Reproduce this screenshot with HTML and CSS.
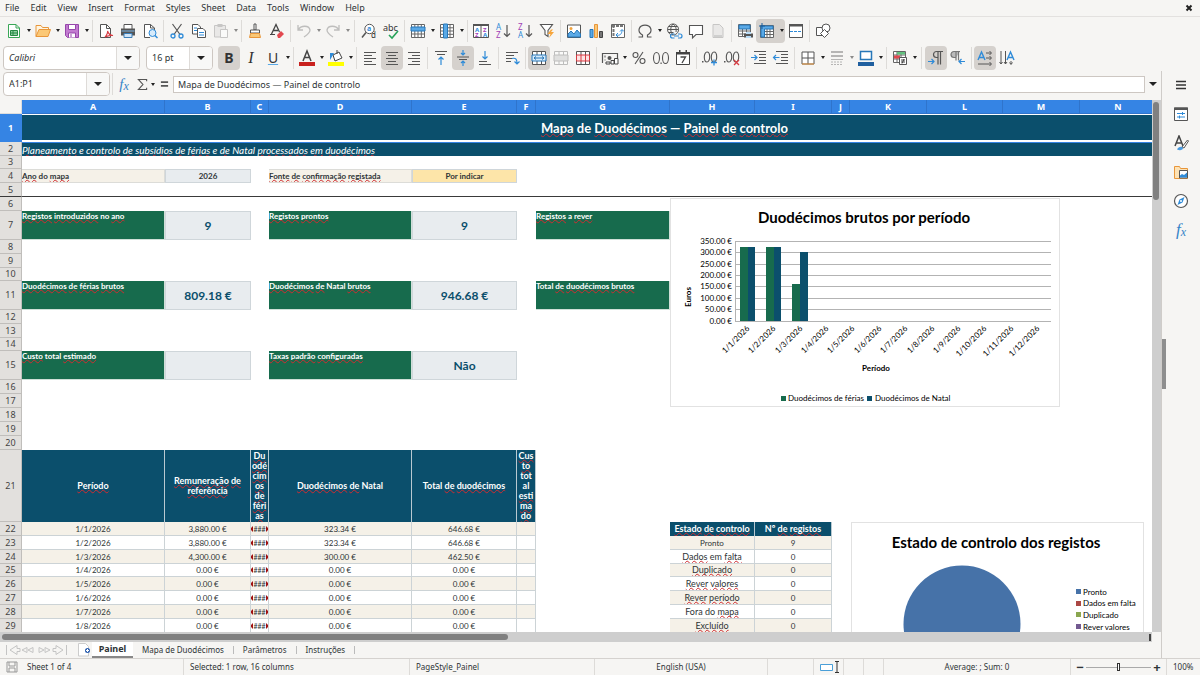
FILE: index.html
```html
<!DOCTYPE html>
<html lang="en">
<head>
<meta charset="utf-8">
<title>Mapa de Duodécimos</title>
<link rel="stylesheet" href="styles.css">
</head>
<body>
<nav class="menubar">
<button>File</button><button>Edit</button><button>View</button><button>Insert</button><button>Format</button><button>Styles</button><button>Sheet</button><button>Data</button><button>Tools</button><button>Window</button><button>Help</button>
<button class="close" aria-label="Close document"><svg width="8" height="8" viewBox="0 0 8 8"><path d="M1.500 1.500l5 5M6.500 1.500l-5 5" stroke="#222" stroke-width="2"/></svg></button>
</nav>

<div class="toolbar">
<button class="tb split" aria-label="New"><svg viewBox="0 0 16 16"><path d="M2.500 1.500h7.500l3.500 3.500v9.500h-11z" fill="#fff" stroke="#3aa757"/><path d="M10 1.500V5h3.500" fill="none" stroke="#3aa757"/><path d="M4.500 7.500h7v5h-7zM4.500 10h7M7 7.500v5" fill="#8fd3a2" stroke="#268844"/></svg><i class="arr"></i></button>
<button class="tb split" aria-label="Open"><svg viewBox="0 0 16 16"><path d="M1 13.500V2.500h5l1.500 2h6v3" fill="#fff4df" stroke="#e8963a"/><path d="M1 13.500l3-7h11.500l-2.500 7z" fill="#fbc876" stroke="#e8963a"/></svg><i class="arr"></i></button>
<button class="tb split" aria-label="Save"><svg viewBox="0 0 16 16"><path d="M1.500 1.500h13v13h-11l-2-2z" fill="#c27bd0" stroke="#9646ab"/><path d="M4.500 1.500h7v5h-7z" fill="#fff" stroke="#9646ab"/><path d="M4.500 14.500v-4.500h7v4.500" fill="#fff" stroke="#9646ab"/><path d="M7 11v3" stroke="#9646ab"/></svg><i class="arr"></i></button>
<span class="sep"></span>
<button class="tb" aria-label="Export as PDF"><svg viewBox="0 0 16 16"><path d="M2.500 1.500h6l4 4v9h-10z" fill="#fff" stroke="#555"/><path d="M8.500 1.500v4h4" fill="none" stroke="#555"/><path d="M7 14c2-2 3-5 2.500-6 1 3 3 4.500 5.500 4.500-3-.5-5 0-8 1.500" fill="none" stroke="#d63b42" stroke-width="1.200"/></svg></button>
<button class="tb" aria-label="Print"><svg viewBox="0 0 16 16"><path d="M4 6V1.500h8V6" fill="#fff" stroke="#555"/><path d="M1 5.500h14v7H1z" fill="#555"/><path d="M1.500 7.500h13v1h-13z" fill="#7db7e6"/><path d="M4 10.500h8v4H4z" fill="#cfe4f7" stroke="#3b7eb8"/></svg></button>
<button class="tb" aria-label="Print preview"><svg viewBox="0 0 16 16"><path d="M12.500 7V5l-4-3.500h-6v13H8M8.500 1.500V5h4" fill="#fff" stroke="#555"/><circle cx="10.500" cy="10" r="3.500" fill="#d7ebfb" stroke="#2f8bd8"/><path d="M13 12.500l2.500 2.500" stroke="#2f8bd8" stroke-width="1.500"/></svg></button>
<span class="sep"></span>
<button class="tb" aria-label="Cut"><svg viewBox="0 0 16 16"><path d="M3.500 1L11 11.500M12.500 1L5 11.500" stroke="#555" stroke-width="1.200"/><circle cx="4" cy="13" r="2" fill="none" stroke="#2f8bd8" stroke-width="1.300"/><circle cx="12" cy="13" r="2" fill="none" stroke="#2f8bd8" stroke-width="1.300"/></svg></button>
<button class="tb" aria-label="Copy"><svg viewBox="0 0 16 16"><path d="M1.500 1.500h5.500l2.500 2.500v7h-8z" fill="#fff" stroke="#555"/><path d="M6.500 5.500h5.500l2.500 2.500v6.500h-8z" fill="#fff" stroke="#555"/><path d="M3 5h3M3 7.500h3M8 9.500h5M8 12h5" stroke="#2f8bd8"/></svg></button>
<button class="tb split dim" aria-label="Paste"><svg viewBox="0 0 16 16"><path d="M1.500 2.500h11v11.500h-11z" fill="#ddd" stroke="#999"/><path d="M4.500 1h5v3h-5z" fill="#999"/><path d="M7.500 6.500h7v8h-7z" fill="#fff" stroke="#999"/></svg><i class="arr"></i></button>
<span class="sep"></span>
<button class="tb" aria-label="Clone formatting"><svg viewBox="0 0 16 16"><path d="M7 1h2v6H7z" fill="#fff" stroke="#555"/><path d="M3.500 7h9v3h-9z" fill="#fff" stroke="#555"/><path d="M3.500 10.500h9l1 4h-11z" fill="#fbc876" stroke="#e8963a"/></svg></button>
<button class="tb" aria-label="Clear formatting"><svg viewBox="0 0 16 16"><path d="M2.500 11L7 1.500 10.500 9M4 7.500h5" fill="none" stroke="#444" stroke-width="1.300"/><path d="M1 11.500h5" stroke="#444"/><path d="M8 12l4-4 3 3-4 4H9z" fill="#e2484f"/></svg></button>
<span class="sep"></span>
<button class="tb split dim" aria-label="Undo"><svg viewBox="0 0 16 16"><path d="M2 2v5h5M2 7c3-5 11-5 12 0 0 3-3 5-6 7" fill="none" stroke="#888" stroke-width="1.300"/></svg><i class="arr"></i></button>
<button class="tb split dim" aria-label="Redo"><svg viewBox="0 0 16 16"><path d="M14 2v5H9M14 7C11 2 3 2 2 7c0 3 3 5 6 7" fill="none" stroke="#888" stroke-width="1.300"/></svg><i class="arr"></i></button>
<span class="sep wide"></span>
<button class="tb" aria-label="Find and replace"><svg viewBox="0 0 16 16"><circle cx="8.500" cy="6" r="4.700" fill="#fff" stroke="#555"/><path d="M5 9.500L1 14.500" stroke="#555" stroke-width="1.500"/><text x="6" y="8" font-size="7" font-weight="700" fill="#2f8bd8">a</text><text x="10" y="15" font-size="8" fill="#333">d</text></svg></button>
<button class="tb" aria-label="Spelling"><svg viewBox="0 0 16 16"><text x="0" y="8" font-size="9" fill="#333">abc</text><path d="M6 12l3 3 6-7" fill="none" stroke="#27a35a" stroke-width="1.600"/></svg></button>
<span class="sep"></span>
<button class="tb split" aria-label="Row"><svg viewBox="0 0 16 16"><path d="M1.500 1.500h13v13h-13zM1.500 11h13M4.800 1.500v13M8 1.500v13M11.300 1.500v13" fill="#fff" stroke="#666"/><path d="M1 4h14v4H1z" fill="#5aa9e6" stroke="#2777b8"/></svg><i class="arr"></i></button>
<button class="tb split" aria-label="Column"><svg viewBox="0 0 16 16"><path d="M1.500 1.500h13v13h-13zM11 1.500v13M1.500 4.800h13M1.500 8h13M1.500 11.300h13" fill="#fff" stroke="#666"/><path d="M4.500 1h4v14h-4z" fill="#5aa9e6" stroke="#2777b8"/></svg><i class="arr"></i></button>
<span class="sep"></span>
<button class="tb" aria-label="Sort"><svg viewBox="0 0 16 16"><path d="M.5 1.500h15v13H.5zM8 2v12" fill="#fff" stroke="#555"/><path d="M0 1h16v2H0z" fill="#555"/><g font-size="6" font-weight="700"><text x="2" y="8.500" fill="#2f8bd8">A</text><text x="2" y="14" fill="#a13fb5">Z</text><text x="10" y="8.500" fill="#a13fb5">Z</text><text x="10" y="14" fill="#2f8bd8">A</text></g></svg></button>
<button class="tb" aria-label="Sort ascending"><svg viewBox="0 0 16 16"><text x="1" y="7" font-size="8" fill="#2f8bd8">A</text><text x="1" y="15" font-size="8" fill="#a13fb5">Z</text><path d="M12 2v11M9 10.500l3 3 3-3" fill="none" stroke="#555" stroke-width="1.200"/></svg></button>
<button class="tb" aria-label="Sort descending"><svg viewBox="0 0 16 16"><text x="1" y="7" font-size="8" fill="#a13fb5">Z</text><text x="1" y="15" font-size="8" fill="#2f8bd8">A</text><path d="M12 2v11M9 10.500l3 3 3-3" fill="none" stroke="#555" stroke-width="1.200"/></svg></button>
<button class="tb" aria-label="AutoFilter"><svg viewBox="0 0 16 16"><path d="M1.500 1.500h12L9 7.500v6L6 11.500v-4z" fill="#fff" stroke="#555" stroke-width="1.100"/><path d="M12 6.500L8.500 11h3l-1.500 4 5-6h-3l2-2.500z" fill="#f7a53b"/></svg></button>
<span class="sep"></span>
<button class="tb" aria-label="Insert image"><svg viewBox="0 0 16 16"><path d="M1.500 2h13v12.500h-13z" fill="#fff" stroke="#555"/><circle cx="5" cy="5.500" r="1.500" fill="#f2a33c"/><path d="M2 14v-3l3-3 3 3 3-4 3.500 4v3z" fill="#5aa9e6" stroke="#2777b8"/></svg></button>
<button class="tb" aria-label="Insert chart"><svg viewBox="0 0 16 16"><path d="M2 6.500h3v8H2z" fill="#5aa9e6" stroke="#2777b8"/><path d="M6.500 1.500h3v13h-3z" fill="#fbc876" stroke="#e8963a"/><path d="M11.500 8.500h3v6h-3z" fill="#777" stroke="#444"/></svg></button>
<button class="tb" aria-label="Pivot table"><svg viewBox="0 0 16 16"><path d="M1.500 1.500h13v13h-13z" fill="#fff" stroke="#666"/><path d="M2 3h12M3.500 2v12" stroke="#777" stroke-width="2" stroke-dasharray="3 1"/><path d="M6 12c4 1 6-1 6-5M10 8.500L12 6.500l2 2M8 10l-2 2 2 2" fill="none" stroke="#2f8bd8"/></svg></button>
<span class="sep"></span>
<button class="tb split" aria-label="Special character"><svg viewBox="0 0 16 16"><path d="M1.500 14h4v-2C2 10 1.500 7.500 2.300 5.500 4 1 12 1 13.700 5.500 14.500 7.500 14 10 10.500 12v2h4" fill="none" stroke="#555" stroke-width="1.200"/></svg><i class="arr"></i></button>
<button class="tb" aria-label="Hyperlink"><svg viewBox="0 0 16 16"><path d="M7 1a5.500 5.500 0 1 0 .1 0M1.500 6.500h11M2.500 3.500h9M2.500 9.500h5M7 1C4 4 4 9 7 12M7 1c3 2 3.500 5 3 8" fill="none" stroke="#555"/><path d="M8.500 11h-2a2 2 0 0 0 0 4h2M12 11h2a2 2 0 0 1 0 4h-2M8 13h5" fill="none" stroke="#2f8bd8" stroke-width="1.200"/></svg></button>
<button class="tb" aria-label="Comment"><svg viewBox="0 0 16 16"><path d="M1.500 2.500h13v9H8L4.500 15v-3.500h-3z" fill="#fff" stroke="#555" stroke-width="1.100"/></svg></button>
<button class="tb dim" aria-label="Headers and footers"><svg viewBox="0 0 16 16"><path d="M3 1.500h6.500l3.500 3.500v9.500H3z" fill="#ddd" stroke="#999"/><path d="M4 12h8v2H4z" fill="#aaa"/></svg></button>
<span class="sep"></span>
<button class="tb" aria-label="Print area"><svg viewBox="0 0 16 16"><path d="M1.500 1.500h12v12h-12zM5.500 1.500v12M9.500 1.500v12M1.500 8h12M1.500 11h12" fill="#fff" stroke="#666"/><path d="M2 2h11v4H2z" fill="#5aa9e6" stroke="#2777b8"/><path d="M7 10.500h9v4H7z" fill="#555"/><path d="M9 9h5v2H9zM9 13h5v2H9z" fill="#b9dcf7"/></svg></button>
<button class="tb split on" aria-label="Freeze rows and columns"><svg viewBox="0 0 16 16"><path d="M1.500 2.500h13v12h-13zM8 2v12M11 2v12M2 8.500h12M2 11.500h12" fill="#fff" stroke="#666"/><path d="M2 3h12v3H5.500v8H2z" fill="#5aa9e6" stroke="#2777b8"/><path d="M3 0v6M0 3h6" stroke="#185f9e"/></svg><i class="arr"></i></button>
<button class="tb" aria-label="Split window"><svg viewBox="0 0 16 16"><path d="M1.500 2h13v12.500h-13z" fill="#fff" stroke="#555"/><path d="M1 1h14v2.500H1z" fill="#555"/><path d="M2 8.500h12" stroke="#2f8bd8" stroke-dasharray="3 1"/></svg></button>
<span class="sep"></span>
<button class="tb" aria-label="Show draw functions"><svg viewBox="0 0 16 16"><path d="M1.500 4.500h8v8h-8z" fill="#fff" stroke="#555"/><circle cx="11" cy="5" r="4" fill="#fff" stroke="#555"/><path d="M9.500 6.500l4 4-4 4-4-4z" fill="#fff" stroke="#555"/></svg></button>
</div>

<div class="toolbar fmt">
<div class="combo font"><input value="Calibri" aria-label="Font name"><button aria-label="Font list"><i class="arr big"></i></button></div>
<div class="combo size"><input value="16 pt" aria-label="Font size"><button aria-label="Size list"><i class="arr big"></i></button></div>
<button class="tb on glyph"><b>B</b></button>
<button class="tb glyph serif"><em>I</em></button>
<button class="tb split glyph"><u>U</u><i class="arr"></i></button>
<span class="sep"></span>
<button class="tb split" aria-label="Font colour"><svg viewBox="0 0 16 16"><path d="M4 11L8 1l4 10M5.500 7.500h5" fill="none" stroke="#444" stroke-width="1.500"/><path d="M0 12h16v4H0z" fill="#c9211e"/></svg><i class="arr"></i></button>
<button class="tb split" aria-label="Background colour"><svg viewBox="0 0 16 16"><path d="M5 5l6-3 3 6-7 3z" fill="#fff" stroke="#444"/><path d="M5 5L2 10V3h4" fill="#2f8bd8"/><path d="M9 0v4" stroke="#444"/><path d="M0 12h16v4H0z" fill="#ff0"/></svg><i class="arr"></i></button>
<span class="sep"></span>
<button class="tb" aria-label="Align left"><svg viewBox="0 0 16 16"><path d="M2 2.500h12M2 5.500h8M2 8.500h12M2 11.500h8M2 14.500h12" stroke="#555"/></svg></button>
<button class="tb on" aria-label="Centre"><svg viewBox="0 0 16 16"><path d="M2 2.500h12M4 5.500h8M2 8.500h12M4 11.500h8M2 14.500h12" stroke="#555"/></svg></button>
<button class="tb" aria-label="Align right"><svg viewBox="0 0 16 16"><path d="M2 2.500h12M6 5.500h8M2 8.500h12M6 11.500h8M2 14.500h12" stroke="#555"/></svg></button>
<span class="sep"></span>
<button class="tb" aria-label="Align top"><svg viewBox="0 0 16 16"><path d="M2 1.500h12M4 4.500h8" stroke="#555"/><path d="M8 15V7M5.500 9.500L8 7l2.500 2.500" fill="none" stroke="#2f8bd8" stroke-width="1.200"/></svg></button>
<button class="tb on" aria-label="Centre vertically"><svg viewBox="0 0 16 16"><path d="M2 7h12M4 9.500h8" stroke="#555"/><path d="M8 0v5M6 3l2 2 2-2M8 16v-5M6 13l2-2 2 2" fill="none" stroke="#2f8bd8" stroke-width="1.200"/></svg></button>
<button class="tb" aria-label="Align bottom"><svg viewBox="0 0 16 16"><path d="M2 11.500h8M2 14.500h12" stroke="#555"/><path d="M8 1v8M5.500 6.500L8 9l2.500-2.500" fill="none" stroke="#2f8bd8" stroke-width="1.200"/></svg></button>
<span class="sep"></span>
<button class="tb" aria-label="Wrap text"><svg viewBox="0 0 16 16"><path d="M2 2.500h12M2 5.500h8M2 8.500h6M2 11.500h5" stroke="#555"/><path d="M8 8.500c4-1 5 1 5 5M10.500 11.500l2.500 2.500 2.500-2.500" fill="none" stroke="#2f8bd8" stroke-width="1.200"/></svg></button>
<span class="sep"></span>
<button class="tb on" aria-label="Merge and centre"><svg viewBox="0 0 16 16"><path d="M1.500 1.500h13v13h-13zM6 1.500v13M10.500 1.500v13" fill="#fff" stroke="#555"/><path d="M1 5h14v6H1z" fill="#d7ebfb" stroke="#2777b8"/><path d="M3 8h10M5 6.500L3 8l2 1.500M11 6.500L13 8l-2 1.500" fill="none" stroke="#2777b8"/></svg></button>
<button class="tb dim" aria-label="Merge cells"><svg viewBox="0 0 16 16"><path d="M1.500 1.500h13v13h-13zM6 1.500v13M10.500 1.500v13" fill="#fff" stroke="#888"/><path d="M1 5h14v6H1z" fill="#ccc" stroke="#888"/></svg></button>
<button class="tb" aria-label="Unmerge cells"><svg viewBox="0 0 16 16"><path d="M1.500 1.500h13v13h-13zM6 1.500v13M10.500 1.500v13" fill="#fff" stroke="#555"/><path d="M1.500 5h13v6h-13zM6 5v6M10.500 5v6" fill="#fde3e3" stroke="#d63b42"/></svg></button>
<span class="sep"></span>
<button class="tb split" aria-label="Currency"><svg viewBox="0 0 16 16"><path d="M1 12.500H.5v-9h15V8" fill="none" stroke="#555" stroke-width="1.200"/><circle cx="7.500" cy="8" r="2" fill="#555"/><path d="M3 5.500v5" stroke="#555" stroke-dasharray="2 2"/><path d="M4 12h4v2H4zM9 10.500h3V14H9zM12.500 8.500H16V14h-3.500z" fill="#fff" stroke="#444"/></svg><i class="arr"></i></button>
<button class="tb" aria-label="Percent"><svg viewBox="0 0 16 16"><circle cx="4.500" cy="5" r="2.500" fill="none" stroke="#555" stroke-width="1.100"/><circle cx="11.500" cy="11" r="2.500" fill="none" stroke="#555" stroke-width="1.100"/><path d="M12 2L4 14" stroke="#555" stroke-width="1.100"/></svg></button>
<button class="tb" aria-label="Number"><svg viewBox="0 0 16 16"><ellipse cx="3.500" cy="8" rx="3" ry="5.500" fill="none" stroke="#555" stroke-width="1.100"/><ellipse cx="12.500" cy="8" rx="3" ry="5.500" fill="none" stroke="#555" stroke-width="1.100"/><path d="M7.500 12.500h1.200V14H7.500z" fill="#555"/></svg></button>
<button class="tb" aria-label="Date"><svg viewBox="0 0 16 16"><path d="M1.500 2.500h13v12h-13z" fill="#fff" stroke="#444"/><path d="M1 2h14v2.500H1zM4 0h1.500v3H4zM10.500 0H12v3h-1.500z" fill="#444"/><path d="M5.500 7h5L7 13" fill="none" stroke="#444" stroke-width="1.300"/></svg></button>
<span class="sep"></span>
<button class="tb" aria-label="Add decimal place"><svg viewBox="0 0 16 16"><ellipse cx="5" cy="7" rx="2.700" ry="5" fill="none" stroke="#555" stroke-width="1.100"/><ellipse cx="12" cy="7" rx="2.700" ry="5" fill="none" stroke="#555" stroke-width="1.100"/><path d="M0 11h1.500v1.500H0z" fill="#555"/><path d="M12 9.500v6M9 12.500h6" stroke="#2f8bd8" stroke-width="1.300"/></svg></button>
<button class="tb" aria-label="Delete decimal place"><svg viewBox="0 0 16 16"><ellipse cx="5" cy="7" rx="2.700" ry="5" fill="none" stroke="#555" stroke-width="1.100"/><ellipse cx="12" cy="7" rx="2.700" ry="5" fill="none" stroke="#555" stroke-width="1.100"/><path d="M0 11h1.500v1.500H0z" fill="#555"/><path d="M10 10l5 5M15 10l-5 5" stroke="#d63b42" stroke-width="1.300"/></svg></button>
<span class="sep"></span>
<button class="tb" aria-label="Increase indent"><svg viewBox="0 0 16 16"><path d="M3 1.500h12M8 4.500h7M8 7.500h7M8 10.500h7M3 13.500h12" stroke="#555"/><path d="M0 7.500h6M3.500 5L6 7.500 3.500 10" fill="none" stroke="#2f8bd8" stroke-width="1.200"/></svg></button>
<button class="tb" aria-label="Decrease indent"><svg viewBox="0 0 16 16"><path d="M3 1.500h12M8 4.500h7M8 7.500h7M8 10.500h7M3 13.500h12" stroke="#555"/><path d="M6.500 7.500h-6M3 5L.5 7.500 3 10" fill="none" stroke="#2f8bd8" stroke-width="1.200"/></svg></button>
<span class="sep"></span>
<button class="tb split" aria-label="Borders"><svg viewBox="0 0 16 16"><path d="M2 2h12v12H2zM8 2v12M2 8h12" fill="#fff" stroke="#555"/><path d="M2 14h12" stroke="#e8963a"/></svg><i class="arr"></i></button>
<button class="tb split dim" aria-label="Border style"><svg viewBox="0 0 16 16"><path d="M2 2h12M2 6h12" stroke="#777" stroke-width="2"/><path d="M2 9.500h12" stroke="#777"/><path d="M2 12h12M2 14.500h12" stroke="#777" stroke-dasharray="2 1"/></svg><i class="arr"></i></button>
<button class="tb split" aria-label="Border colour"><svg viewBox="0 0 16 16"><path d="M2.500 1.500h11v8h-11z" fill="#fff" stroke="#2777b8" stroke-width="1.500"/><path d="M0 12h16v4H0z" fill="#1f5f9f"/></svg><i class="arr"></i></button>
<span class="sep"></span>
<button class="tb split" aria-label="Conditional formatting"><svg viewBox="0 0 16 16"><path d="M1.500 1.500h12v11h-12zM1.500 5h12M1.500 9h12M5 1.500v11M9 1.500v11" fill="#fff" stroke="#666"/><path d="M5 2h8v2.500H5z" fill="#62c17e"/><path d="M2 5.500h6v3H2z" fill="#e2484f"/><path d="M7.500 7.500h7v7h-7z" fill="#fff" stroke="#555"/><path d="M9 10h4M9 12h4M12 9l-2 4.500" stroke="#444"/></svg><i class="arr"></i></button>
<span class="sep wide"></span>
<button class="tb on" aria-label="Left-to-right"><svg viewBox="0 0 16 16"><path d="M15 1.500H8.500a3 3 0 0 0 0 6H10M10 1.500v13M12.500 1.500v13" fill="none" stroke="#555" stroke-width="1.200"/><path d="M0 11.500h6M3.500 9L6 11.500 3.500 14" fill="none" stroke="#2f8bd8" stroke-width="1.200"/></svg></button>
<button class="tb" aria-label="Right-to-left"><svg viewBox="0 0 16 16"><path d="M10 1.500H4a3 3 0 0 0 0 6h2M6 1.500v9M8.500 1.500v9" fill="#bbb" stroke="#777" stroke-width="1.200"/><path d="M15 11.500H9M11.500 9L9 11.500l2.500 2.500" fill="none" stroke="#2f8bd8" stroke-width="1.200"/></svg></button>
<span class="sep"></span>
<button class="tb on" aria-label="Text direction left to right"><svg viewBox="0 0 16 16"><path d="M1 10l3.500-8L8 10M2.300 7.500h4.500" fill="none" stroke="#2f8bd8" stroke-width="1.400"/><path d="M9 3h5M9 8h5M1 14h13M12.500 1l2 2-2 2M12.500 6l2 2-2 2M12.500 12l2 2-2 2" fill="none" stroke="#555"/></svg></button>
<button class="tb" aria-label="Text direction top to bottom"><svg viewBox="0 0 16 16"><path d="M8 10l3.500-8L15 10M9.300 7.500h4.500" fill="none" stroke="#2f8bd8" stroke-width="1.400"/><path d="M2 1v13M6.500 1v13M12 11v3M.5 12L2 14l1.500-2M5 12l1.500 2L8 12M10.500 12.500L12 14.500l1.500-2" fill="none" stroke="#555"/></svg></button>
</div>

<main class="work">
<section class="doc">
<div class="formula">
<div class="combo name"><input value="A1:P1" aria-label="Name box"><button aria-label="Names"><i class="arr big"></i></button></div>
<span class="sep"></span>
<button class="fx" aria-label="Function wizard">f<small>x</small></button>
<button class="sum" aria-label="Select function"><svg viewBox="0 0 12 14"><path d="M10.500 3.500V1.500h-9l5 5.500-5 5.500h9v-2" fill="none" stroke="#555" stroke-width="1.200"/></svg><i class="arr"></i></button>
<button class="eq" aria-label="Formula"><svg viewBox="0 0 10 8"><path d="M1 2h8M1 6h8" stroke="#555" stroke-width="2"/></svg></button>
<input class="line" value="Mapa de Duodécimos — Painel de controlo" aria-label="Input line">
<button class="expand" aria-label="Expand formula bar"><i class="arr big"></i></button>
</div>

<div class="view">
<div class="sheet">
<table>
<colgroup><col class="c22"><col class="c143"><col class="c86"><col class="c18"><col class="c143"><col class="c105"><col class="c19"><col class="c134"><col class="c85"><col class="c77"><col class="c18"><col class="c77"><col class="c76"><col class="c77"><col class="c77"><col class="c77"><col class="c73"></colgroup>
<thead><tr class="h14"><th></th><th>A</th><th>B</th><th>C</th><th>D</th><th>E</th><th>F</th><th>G</th><th>H</th><th>I</th><th>J</th><th>K</th><th>L</th><th>M</th><th>N</th><th>O</th><th>P</th></tr></thead>
<tbody>
<tr class="h28"><th class="cur">1</th><td class="title" colspan="16"><s>Mapa</s> de <s>Duodécimos</s> — <s>Painel</s> <s>de</s> <s>controlo</s></td></tr>
<tr class="h14"><th>2</th><td class="subtitle" colspan="16"><s>Planeamento</s> e <s>controlo</s> <s>de</s> <s>subsídios</s> <s>de</s> <s>férias</s> e <s>de</s> Natal <s>processados</s> <s>em</s> <s>duodécimos</s></td></tr>
<tr class="h13"><th>3</th><td colspan="16"></td></tr>
<tr class="h14"><th>4</th><td class="lab"><s>Ano</s> do <s>mapa</s></td><td class="val">2026</td><td></td><td class="lab"><s>Fonte</s> <s>de</s> <s>confirmação</s> <s>registada</s></td><td class="val warn">Por indicar</td><td colspan="11"></td></tr>
<tr class="h14 frozen"><th>5</th><td colspan="16"></td></tr>
<tr class="h14"><th>6</th><td colspan="16"></td></tr>
<tr class="h29"><th>7</th><td class="kpi"><s>Registos</s> <s>introduzidos</s> no <s>ano</s></td><td class="num">9</td><td></td><td class="kpi"><s>Registos</s> <s>prontos</s></td><td class="num">9</td><td></td><td class="kpi"><s>Registos</s> a <s>rever</s></td><td colspan="9"></td></tr>
<tr class="h14"><th>8</th><td colspan="16"></td></tr>
<tr class="h14"><th>9</th><td colspan="16"></td></tr>
<tr class="h13"><th>10</th><td colspan="16"></td></tr>
<tr class="h29"><th>11</th><td class="kpi"><s>Duodécimos</s> <s>de</s> <s>férias</s> <s>brutos</s></td><td class="num">809.18 €</td><td></td><td class="kpi"><s>Duodécimos</s> <s>de</s> Natal <s>brutos</s></td><td class="num">946.68 €</td><td></td><td class="kpi">Total <s>de</s> <s>duodécimos</s> <s>brutos</s></td><td colspan="9"></td></tr>
<tr class="h14"><th>12</th><td colspan="16"></td></tr>
<tr class="h14"><th>13</th><td colspan="16"></td></tr>
<tr class="h13"><th>14</th><td colspan="16"></td></tr>
<tr class="h29"><th>15</th><td class="kpi"><s>Custo</s> total <s>estimado</s></td><td class="num"></td><td></td><td class="kpi"><s>Taxas</s> <s>padrão</s> <s>configuradas</s></td><td class="num">Não</td><td colspan="11"></td></tr>
<tr class="h14"><th>16</th><td colspan="16"></td></tr>
<tr class="h14"><th>17</th><td colspan="16"></td></tr>
<tr class="h14"><th>18</th><td colspan="16"></td></tr>
<tr class="h14"><th>19</th><td colspan="16"></td></tr>
<tr class="h14"><th>20</th><td colspan="16"></td></tr>
<tr class="h72"><th>21</th><td class="head"><s>Período</s></td><td class="head"><s>Remuneração</s> <s>de</s><br><s>referência</s></td><td class="head"><s>Du</s><br><s>odé</s><br><s>cim</s><br><s>os</s><br><s>de</s><br><s>féri</s><br><s>as</s></td><td class="head"><s>Duodécimos</s> <s>de</s> Natal</td><td class="head">Total <s>de</s> <s>duodécimos</s></td><td class="head"><s>Cus</s><br><s>to</s><br>tot<br>al<br><s>esti</s><br><s>ma</s><br><s>do</s></td><td colspan="10"></td></tr>
<tr class="h14 odd"><th>22</th><td class="b">1/1/2026</td><td class="b">3,880.00 €</td><td class="b over"><span>###</span></td><td class="b">323.34 €</td><td class="b">646.68 €</td><td class="b"></td><td></td><td class="head"><s>Estado</s> <s>de</s> <s>controlo</s></td><td class="head">Nº <s>de</s> <s>registos</s></td><td colspan="7"></td></tr>
<tr class="h14"><th>23</th><td class="b">1/2/2026</td><td class="b">3,880.00 €</td><td class="b over"><span>###</span></td><td class="b">323.34 €</td><td class="b">646.68 €</td><td class="b"></td><td></td><td class="b sand">Pronto</td><td class="b sand">9</td><td colspan="7"></td></tr>
<tr class="h14 odd"><th>24</th><td class="b">1/3/2026</td><td class="b">4,300.00 €</td><td class="b over"><span>###</span></td><td class="b">300.00 €</td><td class="b">462.50 €</td><td class="b"></td><td></td><td class="b plain state"><s>Dados</s> em <s>falta</s></td><td class="b plain">0</td><td colspan="7"></td></tr>
<tr class="h13"><th>25</th><td class="b">1/4/2026</td><td class="b">0.00 €</td><td class="b over"><span>###</span></td><td class="b">0.00 €</td><td class="b">0.00 €</td><td class="b"></td><td></td><td class="b sand state"><s>Duplicado</s></td><td class="b sand">0</td><td colspan="7"></td></tr>
<tr class="h14 odd"><th>26</th><td class="b">1/5/2026</td><td class="b">0.00 €</td><td class="b over"><span>###</span></td><td class="b">0.00 €</td><td class="b">0.00 €</td><td class="b"></td><td></td><td class="b plain state"><s>Rever</s> <s>valores</s></td><td class="b plain">0</td><td colspan="7"></td></tr>
<tr class="h14"><th>27</th><td class="b">1/6/2026</td><td class="b">0.00 €</td><td class="b over"><span>###</span></td><td class="b">0.00 €</td><td class="b">0.00 €</td><td class="b"></td><td></td><td class="b sand state"><s>Rever</s> <s>período</s></td><td class="b sand">0</td><td colspan="7"></td></tr>
<tr class="h14 odd"><th>28</th><td class="b">1/7/2026</td><td class="b">0.00 €</td><td class="b over"><span>###</span></td><td class="b">0.00 €</td><td class="b">0.00 €</td><td class="b"></td><td></td><td class="b plain state">Fora do <s>mapa</s></td><td class="b plain">0</td><td colspan="7"></td></tr>
<tr class="h14"><th>29</th><td class="b">1/8/2026</td><td class="b">0.00 €</td><td class="b over"><span>###</span></td><td class="b">0.00 €</td><td class="b">0.00 €</td><td class="b"></td><td></td><td class="b sand state"><s>Excluído</s></td><td class="b sand">0</td><td colspan="7"></td></tr>
</tbody>
</table>

<svg class="chart bars" width="390" height="209" viewBox="0 0 390 209" role="img" aria-label="Duodécimos brutos por período">
<rect x=".5" y=".5" width="389" height="208" fill="#fff" stroke="#e2e2e2"/>
<text class="ct" x="194" y="25">Duodécimos brutos por período</text>
<path d="M65 43.500h316M65 54.500h316M65 66.500h316M65 77.500h316M65 88.500h316M65 100.500h316M65 111.500h316M65 123.500h316M65.500 43v80" stroke="#b3b3b3"/>
<g fill="#176b4d"><path d="M70 49h8v74h-8zM96 49h8v74h-8zM122 86h8v37h-8z"/></g>
<g fill="#0b4f6c"><path d="M78 49h7v74h-7zM104 49h7v74h-7zM130 54h8v69h-8z"/></g>
<g class="end"><text x="62" y="46">350.00 €</text><text x="62" y="57">300.00 €</text><text x="62" y="69">250.00 €</text><text x="62" y="80">200.00 €</text><text x="62" y="91">150.00 €</text><text x="62" y="103">100.00 €</text><text x="62" y="114">50.00 €</text><text x="62" y="126">0.00 €</text></g>
<g class="end"><text transform="translate(80 131) rotate(-45)">1/1/2026</text><text transform="translate(106 131) rotate(-45)">1/2/2026</text><text transform="translate(133 131) rotate(-45)">1/3/2026</text><text transform="translate(159 131) rotate(-45)">1/4/2026</text><text transform="translate(185 131) rotate(-45)">1/5/2026</text><text transform="translate(212 131) rotate(-45)">1/6/2026</text><text transform="translate(238 131) rotate(-45)">1/7/2026</text><text transform="translate(265 131) rotate(-45)">1/8/2026</text><text transform="translate(291 131) rotate(-45)">1/9/2026</text><text transform="translate(317 131) rotate(-45)">1/10/2026</text><text transform="translate(344 131) rotate(-45)">1/11/2026</text><text transform="translate(370 131) rotate(-45)">1/12/2026</text></g>
<text class="ax" transform="translate(21 99) rotate(-90)">Euros</text>
<text class="ax" x="206" y="173">Período</text>
<path d="M111 198h5v5h-5z" fill="#176b4d"/><text x="118" y="203">Duodécimos de férias</text>
<path d="M197 198h5v5h-5z" fill="#0b4f6c"/><text x="205" y="203">Duodécimos de Natal</text>
</svg>

<svg class="chart pie" width="293" height="180" viewBox="0 0 293 180" role="img" aria-label="Estado de controlo dos registos">
<rect x=".5" y=".5" width="292" height="179" fill="#fff" stroke="#e2e2e2"/>
<text class="ct" x="145" y="26">Estado de controlo dos registos</text>
<circle cx="111" cy="102" r="58.500" fill="#4672a8"/>
<path d="M225 67h5v5h-5z" fill="#4672a8"/><text x="232" y="73">Pronto</text>
<path d="M225 79h5v5h-5z" fill="#ab4744"/><text x="232" y="84">Dados em falta</text>
<path d="M225 90h5v5h-5z" fill="#8aa64f"/><text x="232" y="96">Duplicado</text>
<path d="M225 102h5v5h-5z" fill="#725990"/><text x="232" y="108">Rever valores</text>
</svg>
</div>
<div class="vscroll"><i></i></div>
</div>
<div class="hscroll"><i></i><b></b></div>
<div class="tabs">
<svg class="nav" viewBox="0 0 64 12"><g fill="none" stroke="#c4c4c4"><path d="M1.500 1v10M12 1.500L5 6l7 4.500V7.500h3v-3h-3z"/><path d="M22 3.500L17 6l5 2.500zM28 3.500L23 6l5 2.500z"/><path d="M34 3.500L39 6l-5 2.500zM40 3.500L45 6l-5 2.500z"/><path d="M51 1.500L58 6l-7 4.500V7.500h-3v-3h3zM61.500 1v10"/></g></svg>
<button class="add" aria-label="Add sheet"><svg viewBox="0 0 14 14"><path d="M1.500 .5h7l3 3v9.500h-10z" fill="#fff" stroke="#ccc"/><circle cx="10.500" cy="7.500" r="2.500" fill="#2c5fb0"/><path d="M10.500 6v3M9 7.500h3" stroke="#fff"/></svg></button>
<button class="tab active">Painel</button><button class="tab">Mapa de Duodécimos</button><button class="tab">Parâmetros</button><button class="tab">Instruções</button>
</div>
</section>
<aside class="side">
<button aria-label="Sidebar settings"><svg viewBox="0 0 16 16"><path d="M3 4.500h10M3 8h10M3 11.500h10" stroke="#333" stroke-width="1.500"/></svg></button>
<button aria-label="Properties"><svg viewBox="0 0 16 16"><path d="M1.500 2h13v12.500h-13z" fill="#fff" stroke="#555"/><path d="M1 1.500h14v2.500H1z" fill="#555"/><path d="M4 7.500h8M4 11h8M9.500 6v3M6.500 9.500v3" stroke="#2f8bd8"/></svg></button>
<button aria-label="Styles"><svg viewBox="0 0 16 16"><path d="M2 11L6 1l4 10M3.500 8h5" fill="none" stroke="#444" stroke-width="1.500"/><path d="M9 12l5.500-7 1 1L11 13z" fill="#fff" stroke="#555"/><path d="M4 14.500c1-2 3-3 5-2.500l1 1c0 2-3 3-6 1.500" fill="#4a9be0"/></svg></button>
<button aria-label="Gallery"><svg viewBox="0 0 16 16"><path d="M1.500 14.500V2.500h5l1 2h7v10z" fill="#fde2b5" stroke="#e8963a"/><path d="M6.500 6.500h8v7.500h-8z" fill="#fff" stroke="#555"/><path d="M7 13.500v-2l2-1.500 2 1 3-2.500v5z" fill="#2f8bd8"/></svg></button>
<button aria-label="Navigator"><svg viewBox="0 0 16 16"><circle cx="8" cy="8" r="6.500" fill="#fff" stroke="#555" stroke-width="1.200"/><path d="M11.500 4L9.500 9.500 4.500 12l2-5.500z" fill="#2f8bd8"/><circle cx="8" cy="8" r="1" fill="#fff"/></svg></button>
<button class="fx" aria-label="Functions">f<small>x</small></button>
<span class="grip"></span>
</aside>
</main>

<footer class="status">
<span class="s1"><svg viewBox="0 0 12 12"><path d="M1 1h10v10H1zM3 1v4h6V1M3 11V7h6v4" fill="none" stroke="#999"/></svg>Sheet 1 of 4</span><span class="s2">Selected: 1 row, 16 columns</span><span class="s3">PageStyle_Painel</span><span class="s4">English (USA)</span><span class="s5"></span><span class="s6"><svg viewBox="0 0 20 12"><path d="M.5 3.500h12v6H.5z" fill="#fff" stroke="#4a9fd8"/><path d="M15 .5h4M15 11.500h4M17 .5v11" stroke="#333"/></svg></span><span class="s7"></span><span class="s7"></span><span class="s8">Average: ; Sum: 0</span><span class="s9"><button aria-label="Zoom out">−</button><input type="range" aria-label="Zoom"><button aria-label="Zoom in">+</button></span><span class="s10">100%</span>
</footer>
</body>
</html>
```
FILE: styles.css
```css
* { box-sizing: border-box; }
html, body { margin: 0; height: 100%; }
body { display: flex; flex-direction: column; overflow: hidden; background: #f6f5f3; color: #2e3436; font: 9px/12px "Noto Sans", sans-serif; }
button { display: flex; align-items: center; justify-content: center; margin: 0; padding: 0; border: 0; background: none; color: inherit; font: inherit; }
input { margin: 0; min-width: 0; border: 0; background: none; color: inherit; font: inherit; }

.menubar { display: flex; flex: none; gap: 1px; height: 17px; border-bottom: 1px solid #e3e1df; }
.menubar button { padding: 0 5px; }
.menubar .close { margin-left: auto; padding-right: 7px; }

.toolbar { display: flex; flex: none; align-items: center; height: 27px; padding-left: 3px; }
.tb { flex: none; width: 22px; height: 24px; border-radius: 4px; }
.tb svg { width: 16px; height: 16px; overflow: visible; }
.tb.split { width: 29px; gap: 2px; justify-content: flex-start; padding-left: 3px; }
.tb.on { background: #d5d1cd; }
.dim { opacity: .5; }
.arr { width: 0; height: 0; border: 2px solid transparent; border-top: 3px solid #222; border-bottom: 0; }
.split .arr { margin-left: 3px; }
.arr.big { border-width: 4px 4px 0; }
.sep { flex: none; width: 1px; height: 22px; margin: 0 2px; background: #dddbd8; }
.sep.wide { margin: 0 3px; }
.glyph { font-size: 14px; color: #333; }
.glyph b { font-size: 14px; }
.serif { font-family: "Liberation Serif", serif; font-size: 16px; }
.glyph u { width: 16px; text-decoration-color: #5aa9e6; text-decoration-thickness: 1px; }

.combo { display: flex; flex: none; height: 24px; border: 1px solid #cdc7c2; border-radius: 4px; background: #fff; overflow: hidden; }
.combo input { flex: 1; padding-left: 5px; }
.combo button { width: 23px; border-left: 1px solid #dedbd8; background: #f8f8f7; }
.font { width: 137px; margin-right: 6px; }
.font input { font-style: italic; }
.size { width: 67px; margin-right: 5px; }
.name { width: 107px; margin-left: 3px; }

.work { display: flex; flex: 1; min-height: 0; }
.doc { display: flex; flex: 1; flex-direction: column; min-width: 0; }
.formula { display: flex; flex: none; align-items: center; height: 29px; padding-bottom: 3px; }
.fx { width: 18px; color: #3584c8; font: italic 15px/16px "Liberation Serif", serif; }
.fx small { font-size: 12px; padding-top: 3px; }
.sum { gap: 3px; width: 26px; }
.sum svg { width: 11px; height: 13px; }
.eq { width: 11px; margin-right: 3px; }
.eq svg { width: 9px; height: 8px; }
.line { flex: 1; height: 17px; padding: 0 4px; border: 1px solid #cdc7c2; background: #fff; }
.expand { width: 16px; }

.view { display: flex; flex: 1; min-height: 0; }
.sheet { position: relative; flex: 1; min-width: 0; overflow: hidden; background: #fff; }
.sheet table { width: 1307px; table-layout: fixed; border-collapse: separate; border-spacing: 0; font: 9px/10px Lato, sans-serif; }
.c22 { width: 22px; } .c143 { width: 143px; } .c86 { width: 86px; } .c18 { width: 18px; } .c105 { width: 105px; } .c19 { width: 19px; }
.c134 { width: 134px; } .c85 { width: 85px; } .c77 { width: 77px; } .c76 { width: 76px; } .c73 { width: 73px; }
.h13 { height: 13px; } .h14 { height: 14px; } .h28 { height: 28px; } .h29 { height: 29px; } .h72 { height: 72px; }
th, td { padding: 0; overflow: hidden; white-space: nowrap; }
th { border: solid #c0bebb; border-width: 0 1px 1px 0; background: #e2e0dd; color: #444; font: 9px/12px "Noto Sans", sans-serif; text-align: center; }
thead th { border-color: #2f74cc; background: #3584e4; color: #fff; font-weight: 700; }
thead th:first-child { border-color: #ddd; background: #f6f5f3; }
th.cur { background: #3584e4; border-color: #3584e4; color: #fff; font-weight: 700; }
s { text-decoration: underline wavy #d02b30 1px; text-decoration-skip-ink: none; text-underline-offset: 0; }
.title { border-top: 1px solid #fff; border-bottom: 2px solid #fff; background: #0b4f6c; color: #fff; font-size: 13px; font-weight: 700; line-height: 18px; text-align: center; }
.subtitle { border-top: 1px solid #3584e4; background: #0b4f6c; color: #fff; font-size: 10px; font-style: italic; }
.frozen th, .frozen td { border-bottom: 1px solid #3a3a3a; }
.lab { border: 1px solid #dcdcd8; border-left: 0; background: #f5f1e8; font-size: 8px; font-weight: 700; }
.val { border: 1px solid #cfd6da; background: #e8ecef; font-size: 8px; font-weight: 700; text-align: center; }
.warn { background: #fde5a9; }
.kpi { border: solid #cfe0d8; border-width: 0 1px 1px 0; background: #176b4d; color: #fff; font-size: 8px; font-weight: 700; vertical-align: top; }
.num { border: 1px solid #cfd6da; background: #e8ecef; color: #0b4f6c; font-size: 12px; font-weight: 700; line-height: 14px; text-align: center; }
.head { border: solid #b9c9d1; border-width: 0 1px 0 0; background: #0b4f6c; color: #fff; font-weight: 700; text-align: center; }
.b { border: solid #ccd3d6; border-width: 0 1px 1px 0; font-size: 8px; text-align: center; }
.b.state { font-size: 9px; }
.odd .b, .b.sand { background: #f5f1e8; }
.odd .b.plain { background: #fff; }
.over span { display: flex; align-items: center; justify-content: center; font-size: 7px; }
.over span::before, .over span::after { content: ""; border: 3px solid transparent; border-right-color: #a01010; border-left-width: 0; }
.over span::after { border-right-width: 0; border-left: 3px solid #a01010; }

.chart { position: absolute; font: 8px Lato, sans-serif; }
.chart.bars { left: 670px; top: 98px; }
.chart.pie { left: 851px; top: 422px; }
.ct { font-size: 15px; font-weight: 700; text-anchor: middle; }
.ax { font-weight: 700; text-anchor: middle; }
.end text { text-anchor: end; }

.vscroll { width: 9px; padding: 2px 1px; background: #cecece; }
.vscroll i { display: block; height: 98px; width: 6px; border-radius: 3px; background: #808080; }
.hscroll { display: flex; flex: none; align-items: center; justify-content: space-between; height: 10px; margin-right: 9px; padding: 0 1px 0 2px; background: #cecece; }
.hscroll i { width: 44%; height: 6px; border-radius: 3px; background: #808080; }
.hscroll b { width: 2px; height: 7px; background: #444; }
.tabs { display: flex; flex: none; align-items: center; height: 16px; font-size: 8px; }
.nav { width: 64px; height: 12px; margin: 0 6px 0 5px; }
.add { width: 17px; }
.add svg { width: 14px; height: 14px; }
.tab { height: 16px; padding: 0 9px; }
.tab::after { content: ""; width: 1px; height: 8px; margin: 0 -9px 0 9px; background: #bbb; }
.tab.active { width: 41px; padding: 0; border-bottom: 2px solid #888; background: #fff; font-size: 9px; font-weight: 700; }
.tab.active::after { content: none; }

.side { position: relative; display: flex; flex: none; flex-direction: column; gap: 9px; width: 39px; padding-top: 4px; border-left: 1px solid #cfccc9; }
.side button { width: 100%; height: 20px; }
.side svg { width: 16px; height: 16px; }
.side .fx { font-size: 17px; }
.grip { position: absolute; left: 0; top: 268px; width: 4px; height: 50px; background: #8e8e8e; }

.status { display: flex; flex: none; height: 17px; border-top: 1px solid #d5d2cf; font-size: 8px; }
.status > span { display: flex; align-items: center; padding-left: 6px; border-right: 1px solid #dddbd8; }
.status .s1 { width: 184px; gap: 9px; }
.s1 svg { width: 12px; height: 12px; }
.status .s2 { width: 226px; }
.status .s3 { width: 185px; }
.status .s4 { width: 173px; padding: 0; justify-content: center; }
.status .s5 { width: 46px; }
.status .s6 { width: 30px; }
.s6 svg { width: 20px; height: 12px; }
.status .s7 { width: 20px; }
.status .s8 { flex: 1; padding: 0; justify-content: center; }
.status .s9 { width: 96px; padding: 0 4px; justify-content: space-between; }
.status .s10 { width: 33px; border: 0; }
.s9 button { width: 10px; font-size: 13px; font-weight: 700; }
.s9 input { width: 65px; height: 9px; appearance: none; background: linear-gradient(#aaa, #aaa) center / 100% 1px no-repeat; }
.s9 input::-webkit-slider-thumb { appearance: none; width: 3px; height: 8px; border: 1px solid #333; background: #fff; }
```
